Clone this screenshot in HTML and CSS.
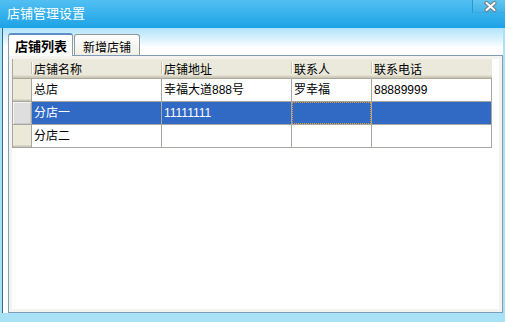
FILE: index.html
```html
<!DOCTYPE html>
<html>
<head>
<meta charset="utf-8">
<link rel="stylesheet" href="styles.css">
</head>
<body>
<div class="window">
  <div class="titlebar">
    <span class="title">店铺管理设置</span>
    <div class="close">
      <svg width="13" height="11" viewBox="0 0 13 11">
        <path d="M2.5 2 L10.5 9 M10.5 2 L2.5 9" stroke="#6f7f8a" stroke-width="4" stroke-linecap="round"/>
        <path d="M2.5 2 L10.5 9 M10.5 2 L2.5 9" stroke="#ffffff" stroke-width="2" stroke-linecap="round"/>
      </svg>
    </div>
  </div>
  <div class="client">
    <div class="tabs">
      <div class="tab active">店铺列表</div>
      <div class="tab">新增店铺</div>
    </div>
    <div class="panel">
      <div class="panel-inner">
        <div class="grid">
          <div class="hcell corner"></div>
          <div class="hcell">店铺名称</div>
          <div class="hcell">店铺地址</div>
          <div class="hcell">联系人</div>
          <div class="hcell">联系电话</div>

          <div class="rhead"></div>
          <div class="cell">总店</div>
          <div class="cell">幸福大道888号</div>
          <div class="cell">罗幸福</div>
          <div class="cell">88889999</div>

          <div class="rhead sel"></div>
          <div class="cell sel">分店一</div>
          <div class="cell sel">11111111</div>
          <div class="cell sel current"></div>
          <div class="cell sel"></div>

          <div class="rhead"></div>
          <div class="cell">分店二</div>
          <div class="cell"></div>
          <div class="cell"></div>
          <div class="cell"></div>
        </div>
      </div>
    </div>
  </div>
</div>
</body>
</html>
```

FILE: styles.css
```css
html, body {
  margin: 0;
  padding: 0;
}
body {
  width: 505px;
  height: 322px;
  overflow: hidden;
  background: #a9e1f6;
  font-family: "Liberation Sans", "Noto Sans CJK SC", sans-serif;
  color: #000;
}
.window {
  width: 505px;
}
.titlebar {
  height: 28px;
  background: linear-gradient(#52bff2, #1ca3e6);
  display: flex;
  justify-content: space-between;
  align-items: flex-start;
}
.title {
  color: #fff;
  font-family: "Noto Sans CJK SC", sans-serif;
  font-size: 13px;
  line-height: 13px;
  padding: 6px 0 0 7px;
}
.close {
  width: 33px;
  height: 13px;
  box-sizing: border-box;
  border-left: 1px solid #2d97cf;
  border-bottom: 1px solid #39a9df;
  background: linear-gradient(#62c5f0, #40b3ea);
  display: flex;
  justify-content: center;
  align-items: flex-start;
  padding-top: 1px;
}
.close svg {
  display: block;
  margin-left: 2px;
}
.client {
  margin-left: 2px;
  width: 501px;
  height: 285px;
  box-sizing: border-box;
  border-left: 1px solid #2f6a92;
  background: linear-gradient(#b0e3fa, #ffffff 20px);
  padding: 5px 0 0 5px;
  display: flex;
  flex-direction: column;
}
.tabs {
  display: flex;
  align-items: flex-end;
  gap: 1px;
  height: 23px;
  margin-bottom: -1px;
  position: relative;
  z-index: 1;
}
.tab {
  height: 21px;
  margin-bottom: 1px;
  box-sizing: border-box;
  border: 1px solid #919b9c;
  border-bottom: none;
  border-radius: 3px 3px 0 0;
  background: linear-gradient(#ffffff, #f1efe6);
  font-family: "Noto Sans CJK SC", sans-serif;
  font-size: 12px;
  line-height: 12px;
  padding: 3px 8px 0 8px;
  display: flex;
  align-items: center;
}
.tab.active {
  height: 23px;
  margin-bottom: 0;
  background: #fff;
  border-top: 2px solid #5a8fc8;
  font-weight: bold;
  font-size: 13px;
  padding: 1px 5px 0 6px;
}
.panel {
  width: 495px;
  height: 258px;
  box-sizing: border-box;
  border: 1px solid #7f9db9;
  background: #f5f3ee;
  padding: 3px;
}
.panel-inner {
  height: 100%;
  background: #fff;
}
.grid {
  display: grid;
  grid-template-columns: 20px 130px 130px 80px 120px;
  grid-template-rows: 20px 23px 23px 23px;
  width: 480px;
  font-size: 12px;
}
.hcell {
  position: relative;
  background: #ebe9dc;
  border-bottom: 1px solid #aca899;
  box-shadow: inset 0 -1px #cbc7b8, inset 0 -2px #d6d2c2, inset 0 -3px #e2decd;
  font-family: "Noto Sans CJK SC", sans-serif;
  line-height: 12px;
  padding-left: 2px;
  display: flex;
  align-items: center;
}
.hcell::before {
  content: "";
  position: absolute;
  left: -1px;
  top: 3px;
  bottom: 4px;
  width: 1px;
  background: #c6c3b3;
  box-shadow: 1px 0 #fff;
}
.hcell.corner {
  padding: 0;
  box-shadow: inset 1px 0 #aca899, inset 0 -1px #cbc7b8, inset 0 -2px #d6d2c2, inset 0 -3px #e2decd;
}
.hcell.corner::before {
  display: none;
}
.cell {
  border-right: 1px solid #a7a6a0;
  border-bottom: 1px solid #a7a6a0;
  padding-left: 2px;
  display: flex;
  align-items: center;
  line-height: 12px;
  position: relative;
  white-space: nowrap;
}
.rhead {
  border-left: 1px solid #a7a6a0;
  border-right: 1px solid #a7a6a0;
  border-bottom: 1px solid #a7a6a0;
  background: #ece9d8;
  box-shadow: inset 0 -1px #cbc7b8, inset 0 -2px #dcd8c8;
}
.rhead.sel {
  background: #dedede;
  box-shadow: inset 1px 1px #f4f4f4, inset -1px -1px #c8c8c8;
}
.cell.sel {
  background: #316ac5;
  color: #fff;
}
.cell.current::after {
  content: "";
  position: absolute;
  inset: 0;
  border: 1px dotted #e39a2a;
}
```
